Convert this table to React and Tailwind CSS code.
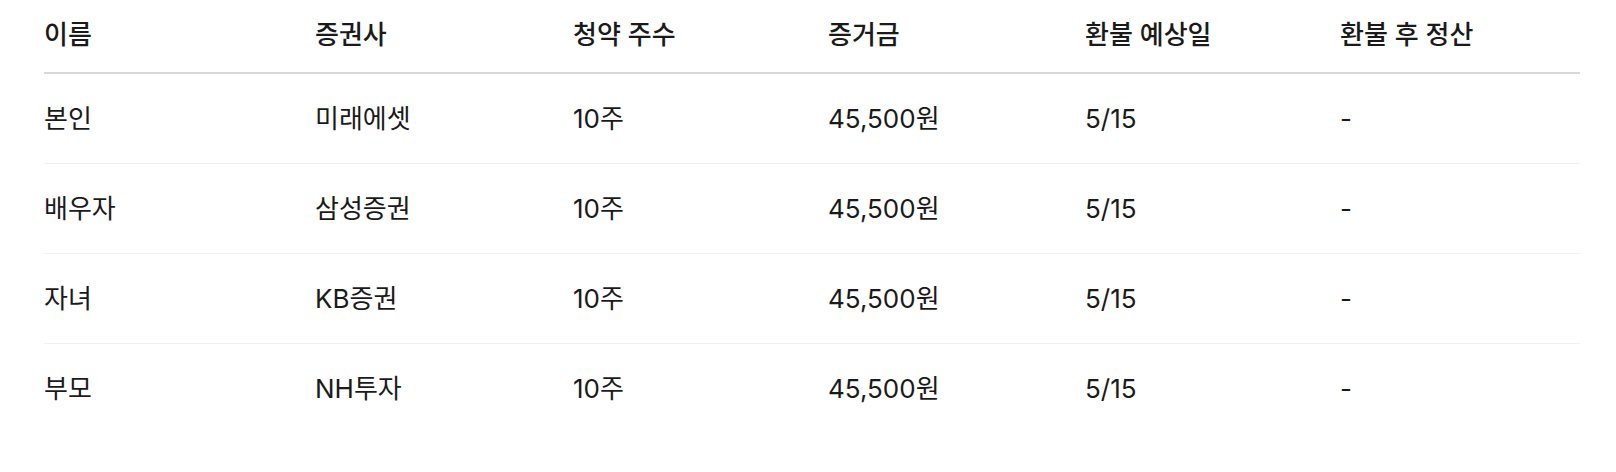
const headers = ["이름", "증권사", "청약 주수", "증거금", "환불 예상일", "환불 후 정산"];

const rows = [
  ["본인", "미래에셋", "10주", "45,500원", "5/15", "-"],
  ["배우자", "삼성증권", "10주", "45,500원", "5/15", "-"],
  ["자녀", "KB증권", "10주", "45,500원", "5/15", "-"],
  ["부모", "NH투자", "10주", "45,500원", "5/15", "-"],
];

const cols = "grid grid-cols-[271px_258px_255px_257px_255px_1fr]";

export default function App() {
  return (
    <div
      className="bg-white pl-11 pr-9 h-[472px] text-[#1a1a1a]"
      style={{ fontFamily: 'Inter, "Noto Sans CJK KR", sans-serif' }}
    >
      <div className={`${cols} h-[74px] items-center border-b-2 border-[#d9d9d9] pb-[2px]`}>
        {headers.map((h) => (
          <div key={h} className="text-[26px] font-medium leading-none">
            {h}
          </div>
        ))}
      </div>
      {rows.map((r, i) => (
        <div
          key={i}
          className={`${cols} h-[90px] items-center ${i < rows.length - 1 ? "border-b border-[#f0f0f0]" : ""}`}
        >
          {r.map((c, j) => (
            <div key={j} className="text-[26px] leading-none">
              {c}
            </div>
          ))}
        </div>
      ))}
    </div>
  );
}
